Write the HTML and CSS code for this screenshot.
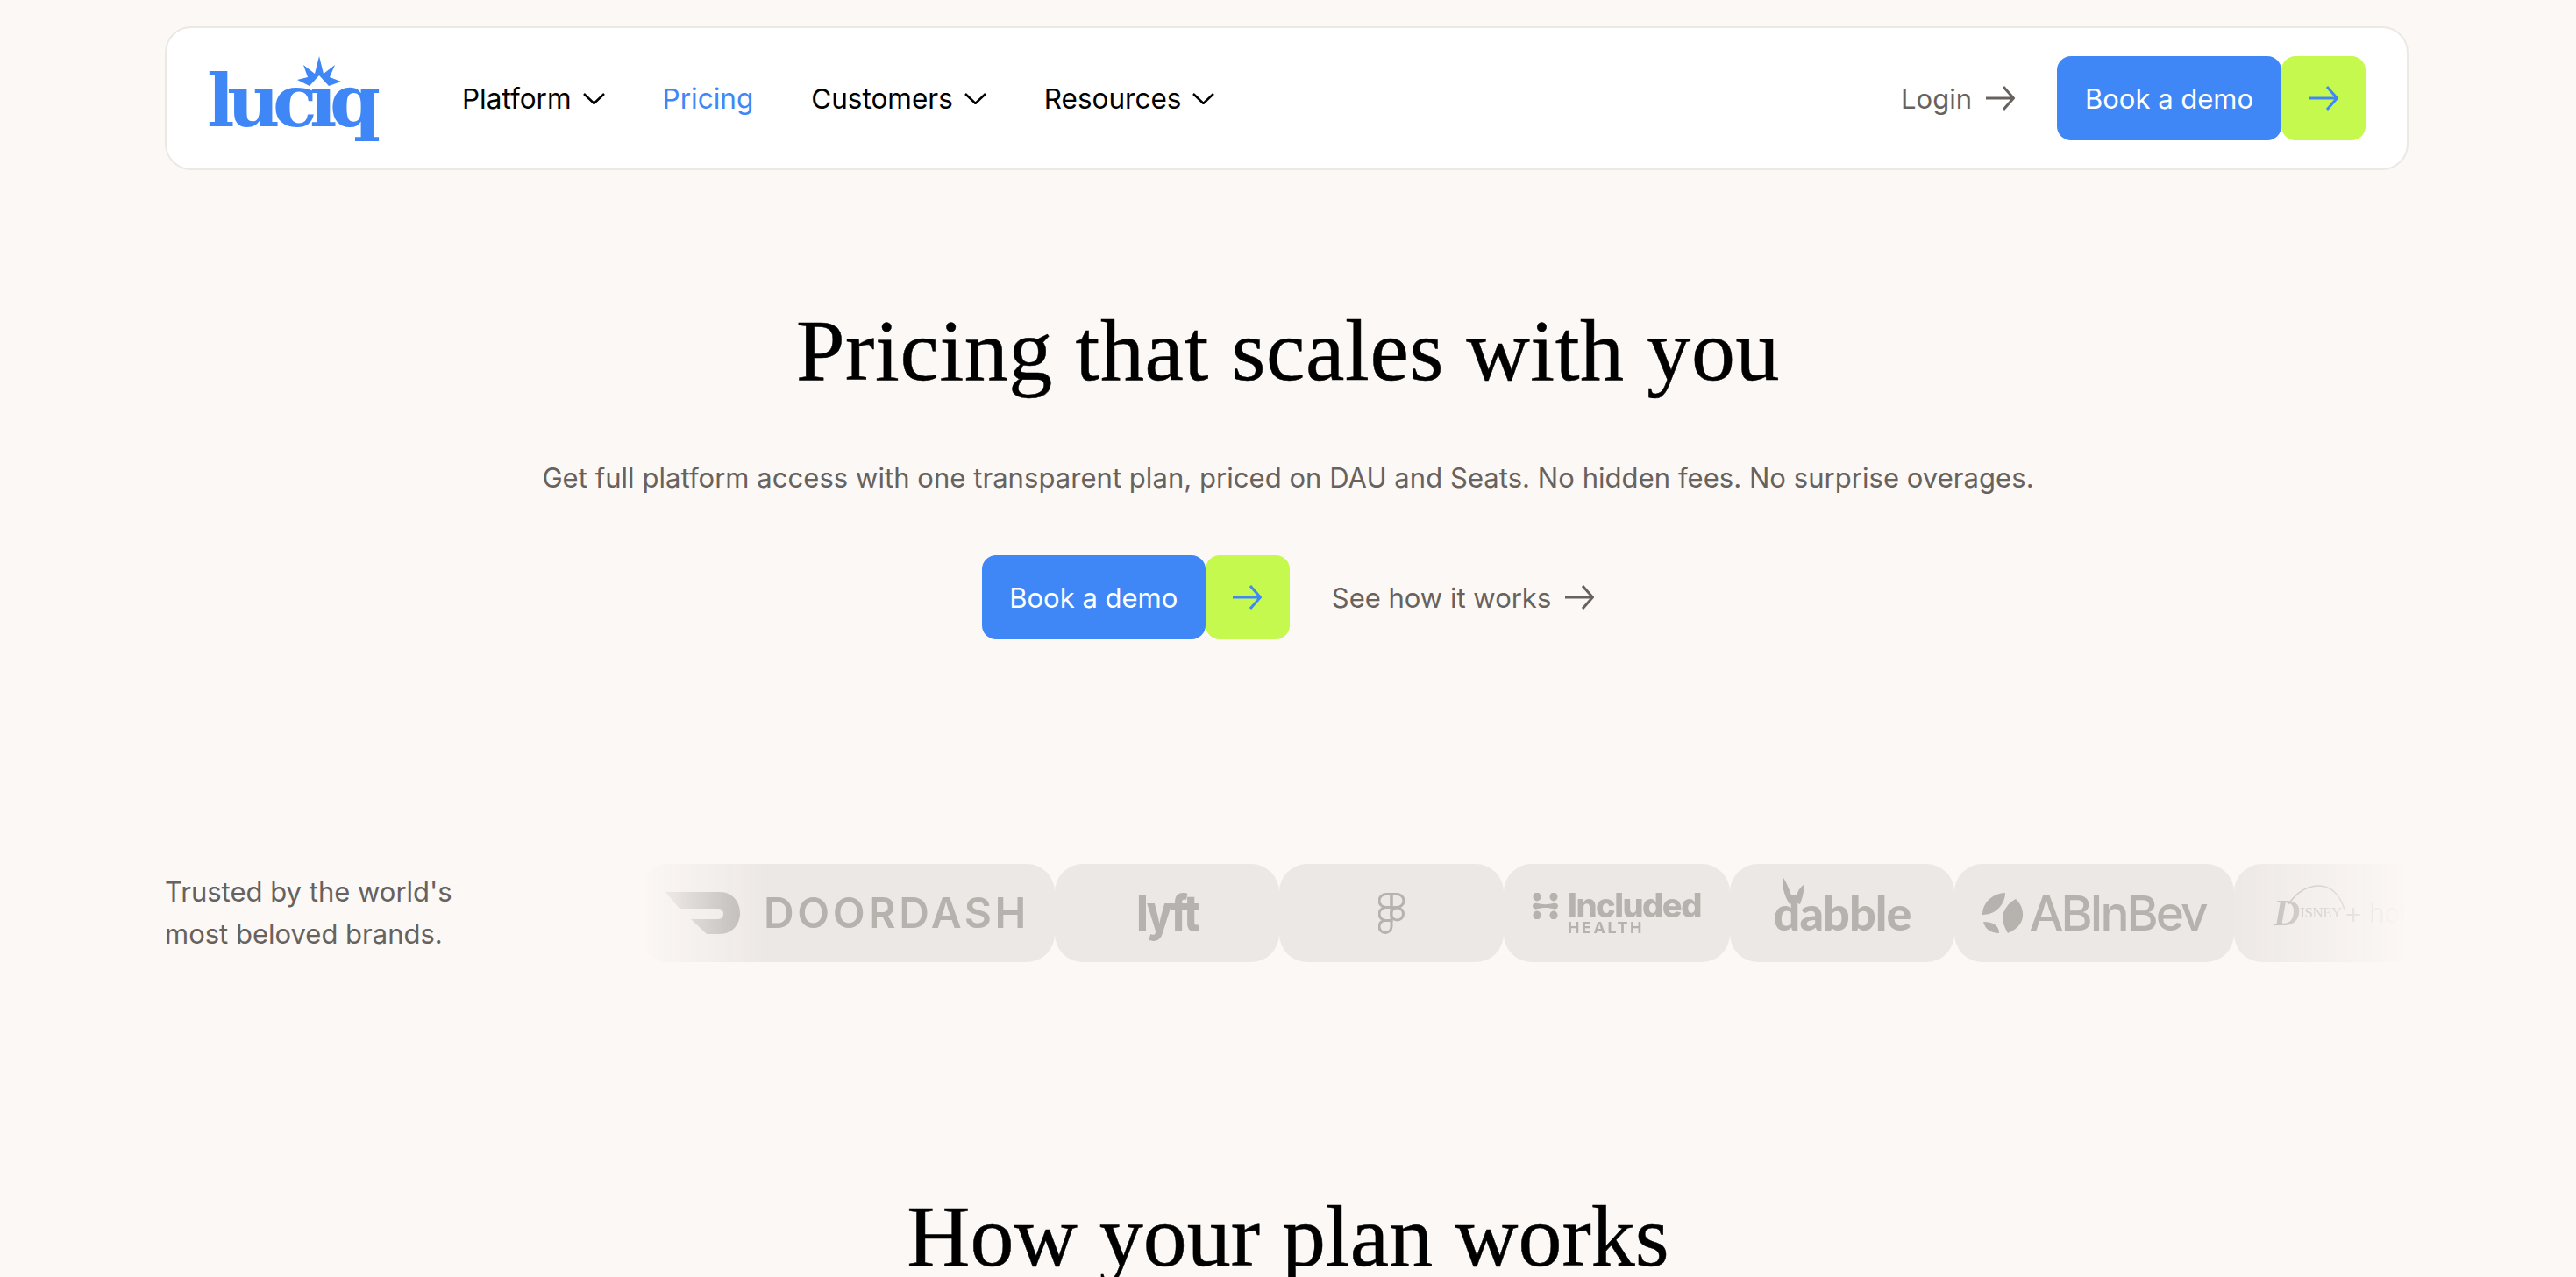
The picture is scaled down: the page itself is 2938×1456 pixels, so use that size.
FILE: index.html
```html
<!DOCTYPE html>
<html>
<head>
    <title>Pricing | Luciq</title>
    <link rel="stylesheet" href="styles.css">
</head>
<body>
    <div class="page">
        <nav class="navbar">
            <a href="#" class="logo">
                <svg class="logo-star" viewBox="0 0 50 34"><path d="M25 0L30 20L43 10L37 24L50 29L36 34L25 22L14 34L0 27L12 24L7 10L20 20Z"/></svg>
                <span class="logo-text">lucıq</span>
            </a>
            <div class="nav-links">
                <a href="#" class="nav-link">Platform
                    <svg class="chevron" viewBox="0 0 25 13"><path d="M1 1L12.500 12L24 1"/></svg>
                </a>
                <a href="#" class="nav-link active">Pricing</a>
                <a href="#" class="nav-link">Customers
                    <svg class="chevron" viewBox="0 0 25 13"><path d="M1 1L12.500 12L24 1"/></svg>
                </a>
                <a href="#" class="nav-link">Resources
                    <svg class="chevron" viewBox="0 0 25 13"><path d="M1 1L12.500 12L24 1"/></svg>
                </a>
            </div>
            <div class="nav-actions">
                <a href="#" class="text-link">Login
                    <svg class="arrow" viewBox="0 0 33 28"><path d="M0 14H31M20 1L31.500 14L20 27"/></svg>
                </a>
                <a href="#" class="demo-btn">
                    <span class="demo-label">Book a demo</span>
                    <span class="demo-arrow"><svg class="arrow" viewBox="0 0 33 28"><path d="M0 14H31M20 1L31.500 14L20 27"/></svg></span>
                </a>
            </div>
        </nav>

        <section class="hero">
            <h1>Pricing that scales with you</h1>
            <p>Get full platform access with one transparent plan, priced on DAU and Seats. No hidden fees. No surprise overages.</p>
            <div class="hero-actions">
                <a href="#" class="demo-btn">
                    <span class="demo-label">Book a demo</span>
                    <span class="demo-arrow"><svg class="arrow" viewBox="0 0 33 28"><path d="M0 14H31M20 1L31.500 14L20 27"/></svg></span>
                </a>
                <a href="#" class="text-link">See how it works
                    <svg class="arrow" viewBox="0 0 33 28"><path d="M0 14H31M20 1L31.500 14L20 27"/></svg>
                </a>
            </div>
        </section>

        <section class="brands">
            <p class="brands-title">Trusted by the world's<br>most beloved brands.</p>
            <div class="marquee">
                <div class="chip chip-doordash">
                    <svg class="dd-mark" viewBox="0 0 85 48"><path d="M0 0H62C76 0 85 11 85 24S76 48 62 48H47L29 31H60C64 31 66 28 66 25S64 19 60 19H16Z"/></svg>
                    <span class="dd-text">DOORDASH</span>
                </div>
                <div class="chip chip-small">
                    <span class="lyft">lyft</span>
                </div>
                <div class="chip chip-small">
                    <svg class="figma" viewBox="0 0 30 47">
                        <path d="M15 1.500H8.500a7 7 0 0 0 0 15H15Z"/>
                        <path d="M15 1.500h6.500a7 7 0 0 1 0 15H15Z"/>
                        <path d="M15 16.500H8.500a7 7 0 0 0 0 15H15Z"/>
                        <circle cx="21.500" cy="24" r="7"/>
                        <path d="M8.500 31.500H15v7a7 7 0 1 1-6.500-7Z"/>
                    </svg>
                </div>
                <div class="chip chip-included">
                    <svg class="inc-mark" viewBox="0 0 29 30">
                        <ellipse cx="5" cy="4.500" rx="4.500" ry="5"/>
                        <ellipse cx="24" cy="4.500" rx="4.500" ry="5"/>
                        <path d="M0 15C0 12 3 11 6 12C11 13.500 18 13.500 23 12C26 11 29 12 29 15C29 18 26 19 23 18C18 16.500 11 16.500 6 18C3 19 0 18 0 15Z"/>
                        <ellipse cx="5" cy="25.500" rx="4.500" ry="5"/>
                        <ellipse cx="24" cy="25.500" rx="4.500" ry="5"/>
                    </svg>
                    <div class="inc-text">
                        <span class="inc-name">Included</span>
                        <span class="inc-sub">HEALTH</span>
                    </div>
                </div>
                <div class="chip chip-small">
                    <span class="dabble">
                        <svg class="dabble-ears" viewBox="0 0 34 30"><path d="M12 30C6 20 3 10 5 0C9 6 13 16 17 28ZM19 28C19 20 22 12 28 8C29 14 27 22 24 30Z"/></svg>
                        dabble
                    </span>
                </div>
                <div class="chip chip-abinbev">
                    <svg class="ab-mark" viewBox="0 0 47 46">
                        <path d="M26 0C26 10 18 25 0 25C0 12 10 1 26 0Z"/>
                        <path d="M38 7C46 14 50 28 41 38C37 42 33 44 29 46C24 38 20 26 27 17C30 12 34 9 38 7Z"/>
                        <path d="M1 33C12 33 19 37 19 46C9 46 3 41 1 33Z"/>
                    </svg>
                    <span class="ab-text">ABInBev</span>
                </div>
                <div class="chip chip-disney">
                    <span class="disney">
                        <svg class="disney-arc" viewBox="0 0 66 30"><path d="M1 22C12 6 24 1 36 1C50 1 60 12 65 28"/></svg>
                        <span class="disney-d">D</span><span class="disney-name">ISNEY</span>
                    </span>
                    <span class="disney-plus">+</span>
                    <span class="hotstar">hotstar</span>
                </div>
            </div>
        </section>

        <section class="plan">
            <h2>How your plan works</h2>
        </section>
    </div>
</body>
</html>
```

FILE: styles.css
```css
html, body {
    margin: 0;
    height: 100%;
    overflow: hidden;
}
body {
    font-family: Inter, "Noto Sans", sans-serif;
    background-color: #fcf8f5;
    color: #000;
}
a {
    text-decoration: none;
    color: inherit;
}
.page {
    height: 1456px;
    overflow: hidden;
    padding: 30px 188px 0;
    box-sizing: border-box;
}

/* navbar */
.navbar {
    display: flex;
    align-items: center;
    height: 164px;
    box-sizing: border-box;
    padding: 0 47px 0 48px;
    background-color: #fff;
    border: 2px solid #ece8e4;
    border-radius: 30px;
    width: 2559px;
}
.logo {
    position: relative;
    display: block;
    width: 192px;
    height: 96px;
    color: #3f87f7;
    flex-shrink: 0;
}
.logo-star {
    position: absolute;
    left: 101px;
    top: 0;
    width: 50px;
    height: 34px;
    fill: #3f87f7;
}
.logo-text {
    position: absolute;
    left: -2px;
    top: 0;
    font-family: "DejaVu Serif", serif;
    font-weight: 700;
    font-size: 83px;
    line-height: 102px;
    letter-spacing: -8.500px;
}
.nav-links {
    display: flex;
    align-items: center;
    gap: 66px;
    margin-left: 97px;
    font-size: 31.500px;
}
.nav-link {
    display: flex;
    align-items: center;
    gap: 13px;
}
.nav-link.active {
    color: #3f87f7;
}
.chevron {
    width: 25px;
    height: 13px;
    fill: none;
    stroke: #000;
    stroke-width: 2.500;
}
.nav-actions {
    display: flex;
    align-items: center;
    gap: 48px;
    margin-left: auto;
}
.text-link {
    display: flex;
    align-items: center;
    gap: 16px;
    font-size: 31px;
    color: #67625e;
}
.arrow {
    width: 33px;
    height: 28px;
    fill: none;
    stroke: #67625e;
    stroke-width: 3;
}

/* book a demo button */
.demo-btn {
    display: flex;
    height: 96px;
    font-size: 31px;
    color: #fff;
}
.demo-label {
    display: flex;
    align-items: center;
    justify-content: center;
    width: 256px;
    background-color: #3f87f7;
    border-radius: 16px;
}
.demo-arrow {
    display: flex;
    align-items: center;
    justify-content: center;
    width: 96px;
    background-color: #c5f94e;
    border-radius: 16px;
}
.demo-arrow .arrow {
    stroke: #3f87f7;
}

/* hero */
.hero {
    text-align: center;
}
.hero h1 {
    margin: 146px 0 0;
    font-family: "Liberation Serif", serif;
    font-weight: 400;
    font-size: 100px;
    line-height: 120px;
    letter-spacing: .6px;
    -webkit-text-stroke: .5px #000;
}
.hero p {
    margin: 61px 0 0;
    font-size: 31px;
    line-height: 48px;
    letter-spacing: .05px;
    color: #67625e;
}
.hero-actions {
    display: flex;
    justify-content: center;
    align-items: center;
    gap: 48px;
    margin-top: 64px;
}
.hero-actions .demo-label {
    width: 255px;
}

/* logos */
.brands {
    display: flex;
    align-items: center;
    margin-top: 256px;
}
.brands-title {
    width: 542px;
    flex-shrink: 0;
    margin: 0;
    font-size: 31px;
    line-height: 48px;
    color: #67625e;
}
.marquee {
    display: flex;
    width: 2015px;
    overflow: hidden;
    flex-shrink: 0;
    -webkit-mask-image: linear-gradient(to right, transparent 0, #000 7%, #000 90%, transparent 100%);
    mask-image: linear-gradient(to right, transparent 0, #000 7%, #000 90%, transparent 100%);
}
.chip {
    display: flex;
    align-items: center;
    justify-content: center;
    height: 112px;
    flex-shrink: 0;
    background-color: #ece8e5;
    border-radius: 32px;
    color: #b6b2ae;
    font-weight: 700;
}
.chip-small {
    width: 256px;
}
.chip-doordash {
    width: 473px;
    gap: 27px;
}
.dd-mark {
    width: 85px;
    height: 48px;
    fill: #b6b2ae;
}
.dd-text {
    font-family: Inter, sans-serif;
    font-weight: 600;
    font-size: 48px;
    line-height: 56px;
    letter-spacing: 3.600px;
}
.lyft {
    font-family: Inter, sans-serif;
    font-weight: 800;
    font-size: 56px;
    letter-spacing: -3px;
    transform: scaleX(.85);
}
.figma {
    width: 30px;
    height: 47px;
    fill: none;
    stroke: #b6b2ae;
    stroke-width: 3;
}
.chip-included {
    width: 258px;
    gap: 11px;
}
.inc-mark {
    width: 29px;
    height: 30px;
    fill: #b6b2ae;
    margin-bottom: 17px;
}
.inc-text {
    display: flex;
    flex-direction: column;
}
.inc-name {
    font-weight: 800;
    font-size: 38px;
    line-height: 34px;
    letter-spacing: -1.500px;
}
.inc-sub {
    font-weight: 700;
    font-size: 18px;
    line-height: 18px;
    letter-spacing: 2.500px;
}
.dabble {
    position: relative;
    font-family: Lato, sans-serif;
    font-weight: 900;
    font-size: 54px;
    letter-spacing: -1px;
    line-height: 56px;
}
.dabble-ears {
    position: absolute;
    left: 6px;
    top: -12px;
    width: 34px;
    height: 30px;
    fill: #b6b2ae;
}
.chip-abinbev {
    width: 319px;
    gap: 6px;
}
.ab-mark {
    width: 47px;
    height: 46px;
    fill: #b6b2ae;
}
.ab-text {
    font-weight: 500;
    font-size: 55px;
    letter-spacing: -3px;
}
.chip-disney {
    width: 300px;
    justify-content: flex-start;
    padding-left: 45px;
    box-sizing: border-box;
    font-weight: 400;
}
.disney {
    position: relative;
    font-family: "Liberation Serif", serif;
    display: flex;
    align-items: center;
}
.disney-arc {
    position: absolute;
    left: 16px;
    top: -8px;
    width: 66px;
    height: 30px;
    fill: none;
    stroke: #b6b2ae;
    stroke-width: 1.500;
}
.disney-d {
    font-size: 42px;
    font-style: italic;
    font-weight: 700;
}
.disney-name {
    font-size: 17px;
    letter-spacing: -.5px;
}
.disney-plus {
    font-size: 34px;
    font-weight: 300;
    margin-left: 2px;
    line-height: 40px;
}
.hotstar {
    font-size: 30px;
    font-weight: 300;
    margin-left: 7px;
}

/* next section */
.plan {
    text-align: center;
}
.plan h2 {
    margin: 253px 0 0;
    font-family: "Liberation Serif", serif;
    font-weight: 400;
    font-size: 100px;
    line-height: 120px;
    -webkit-text-stroke: .5px #000;
}
```
